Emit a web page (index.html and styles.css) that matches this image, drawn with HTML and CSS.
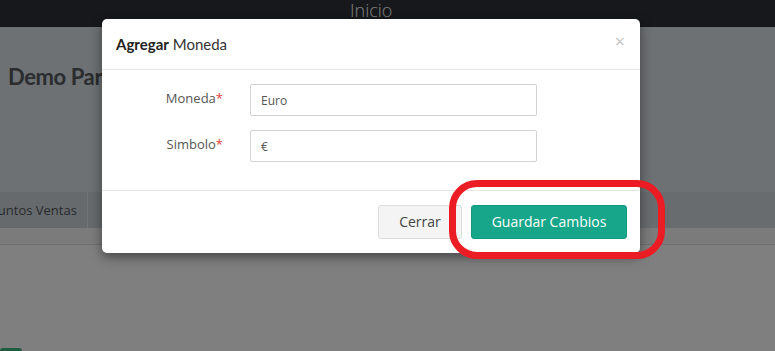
FILE: index.html
```html
<!DOCTYPE html>
<html lang="es">
<head>
    <meta charset="UTF-8">
    <meta name="viewport" content="width=device-width, initial-scale=1.0">
    <title>Agregar Moneda</title>
    <link rel="stylesheet" href="styles.css">
</head>
<body>
    <div class="topbar">
        <span class="topbar-title">Inicio</span>
    </div>
    <div class="page-head">
        <h1>Demo Parametros</h1>
    </div>
    <div class="tabs">
        <div class="tab">Puntos Ventas</div>
        <div class="tab tab-empty"></div>
    </div>
    <div class="subbar"></div>
    <div class="content">
        <span class="green-btn"></span>
    </div>

    <div class="backdrop"></div>

    <div class="modal">
        <div class="modal-header">
            <h4 class="modal-title"><strong>Agregar</strong> Moneda</h4>
            <span class="close">&times;</span>
        </div>
        <div class="modal-body">
            <div class="form-row">
                <label>Moneda<span class="req">*</span></label>
                <input type="text" class="form-input" value="Euro">
            </div>
            <div class="form-row">
                <label>Simbolo<span class="req">*</span></label>
                <input type="text" class="form-input" value="€">
            </div>
        </div>
        <div class="modal-footer">
            <button class="btn btn-default">Cerrar</button>
            <button class="btn btn-primary">Guardar Cambios</button>
        </div>
    </div>

    <!-- marca roja de la captura -->
    <div class="highlight"></div>
</body>
</html>
```

FILE: styles.css
```css
body {
    margin: 0;
    font-family: "Open Sans", Arial, sans-serif;
    background-color: #ffffff;
    height: 351px;
    overflow: hidden;
    position: relative;
}
.topbar {
    height: 27px;
    background-color: #2e3036;
    padding-left: 350px;
    box-sizing: border-box;
}
.topbar-title {
    color: #ffffff;
    font-size: 18px;
    font-weight: 300;
    line-height: 19px;
    display: inline-block;
    margin-top: -1px;
}
.page-head {
    height: 165px;
    background-color: #dce2e8;
    padding: 36px 0 0 8px;
    box-sizing: border-box;
}
.page-head h1 {
    margin: 0;
    font-family: Lato, "Open Sans", sans-serif;
    font-size: 22px;
    font-weight: 700;
    color: #55595d;
    letter-spacing: -0.4px;
}
.tabs {
    display: flex;
    height: 36px;
    background-color: #d3d9df;
    margin-left: -22px;
}
.tab {
    padding: 0 10px 0 12px;
    font-size: 13px;
    line-height: 36px;
    color: #505458;
    border-right: 1px solid #e2e7ec;
    background-color: #ced4da;
}
.tab-empty {
    width: 10px;
}
.subbar {
    height: 16px;
    background-color: #f6f6f6;
    border-bottom: 1px solid #dedede;
}
.content {
    height: 106px;
    position: relative;
}
.green-btn {
    position: absolute;
    left: 0;
    top: 103px;
    width: 22px;
    height: 14px;
    background-color: #3fb87a;
    border-radius: 3px 3px 0 0;
}
.backdrop {
    position: absolute;
    inset: 0;
    background-color: rgba(0, 0, 0, 0.5);
}
.modal {
    position: absolute;
    left: 102px;
    top: 19px;
    width: 538px;
    background-color: #ffffff;
    border-radius: 5px;
    box-shadow: 0 4px 12px rgba(0, 0, 0, 0.45);
}
.modal-header {
    height: 51px;
    padding: 0 14px;
    border-bottom: 1px solid #e5e5e5;
    display: flex;
    align-items: center;
    justify-content: space-between;
    box-sizing: border-box;
}
.modal-title {
    margin: 0;
    font-family: Lato, "Open Sans", sans-serif;
    font-size: 15px;
    font-weight: 400;
    color: #333;
}
.modal-title strong {
    font-weight: 700;
    color: #222;
}
.close {
    font-size: 18px;
    color: #c4c4c4;
    line-height: 1;
    margin-top: -6px;
    margin-right: 1px;
}
.modal-body {
    padding: 14px 0 28px 0;
    border-bottom: 1px solid #e5e5e5;
}
.form-row {
    display: grid;
    grid-template-columns: 121px 287px;
    column-gap: 27px;
    align-items: center;
    margin-bottom: 14px;
}
.form-row:last-child {
    margin-bottom: 0;
}
.form-row label {
    text-align: right;
    font-size: 13px;
    color: #555;
    margin-top: -4px;
}
.req {
    color: #e2403a;
}
.form-input {
    height: 32px;
    box-sizing: border-box;
    border: 1px solid #d2d2d2;
    border-radius: 2px;
    padding: 0 10px;
    font-family: "Open Sans", Arial, sans-serif;
    font-size: 12px;
    color: #555;
    outline: none;
}
.modal-footer {
    height: 62px;
    padding: 0 13px 0 0;
    display: flex;
    justify-content: flex-end;
    align-items: center;
    gap: 9px;
    box-sizing: border-box;
}
.btn {
    height: 34px;
    border-radius: 3px;
    font-family: "Open Sans", Arial, sans-serif;
    font-size: 14px;
    padding: 0;
    white-space: nowrap;
    cursor: pointer;
    margin-top: -1px;
}
.btn-default {
    width: 84px;
    background-color: #f4f4f4;
    border: 1px solid #dcdcdc;
    color: #444;
}
.btn-primary {
    width: 156px;
    background-color: #17a689;
    border: 1px solid #14977c;
    color: #ffffff;
    font-weight: 500;
}
.highlight {
    position: absolute;
    left: 449px;
    top: 180px;
    width: 216px;
    height: 79px;
    box-sizing: border-box;
    border: 7px solid #ec1c24;
    border-radius: 28px;
}
```
